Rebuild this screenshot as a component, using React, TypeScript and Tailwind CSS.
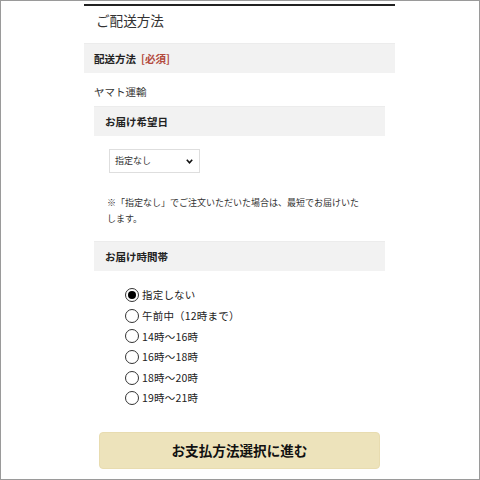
import React from "react";

const times = [
  "指定しない",
  "午前中（12時まで）",
  "14時～16時",
  "16時～18時",
  "18時～20時",
  "19時～21時"
];

const SubHeader: React.FC<{ label: string }> = ({ label }) => (
  <div className="h-[30px] bg-[#f2f2f2] border-t border-[#ececec] pl-[11px] flex items-center text-[10.5px] font-bold text-[#222]">
    {label}
  </div>
);

const App: React.FC = () => {
  return (
    <div
      className="w-[480px] h-[480px] border border-[#9a9a9a] bg-white overflow-hidden"
      style={{ fontFamily: '"Noto Sans CJK JP", "Noto Sans", sans-serif' }}
    >
      <div className="ml-[83px] w-[311px] pt-[3px]">
        <div className="h-[2px] bg-[#222]" />
        <h1 className="h-[28px] leading-[28px] pl-[12px] mb-[9px] text-[13.6px] text-[#333]">
          ご配送方法
        </h1>
        <div className="h-[30px] bg-[#f2f2f2] border-t border-[#ececec] px-[10px] flex items-center gap-[5px] text-[10.5px] font-bold text-[#222]">
          <span>配送方法</span>
          <span className="text-[#b34a3d]">[必須]</span>
        </div>
        <div className="px-[10px]">
          <div className="mt-[11px] mb-[6px] h-[16px] leading-[16px] text-[10.5px] text-[#333]">
            ヤマト運輸
          </div>
          <SubHeader label="お届け希望日" />
          <div className="pl-[15px] mt-[13px]">
            <div className="w-[91px] h-[24px] border border-[#dedede] bg-white flex items-center justify-between pl-[5px] pr-[6px] text-[9px] text-[#333]">
              <span>指定なし</span>
              <svg width="7" height="5" viewBox="0 0 7 5">
                <polyline points="0.8,0.8 3.5,3.8 6.2,0.8" fill="none" stroke="#111" strokeWidth="1.6" />
              </svg>
            </div>
          </div>
          <p className="mt-[22px] mb-[15px] pl-[13px] w-[271px] text-[9px] leading-[15.5px] text-[#333]">
            ※「指定なし」でご注文いただいた場合は、最短でお届けいたします。
          </p>
          <SubHeader label="お届け時間帯" />
          <ul className="mt-[14px] pl-[31px]">
            {times.map((t, i) => (
              <li key={t} className="h-[20.6px] flex items-center gap-[3px] text-[10.5px] text-[#222]">
                <span className="w-[14px] h-[14px] rounded-full border border-[#333] flex items-center justify-center shrink-0">
                  {i === 0 && <span className="w-[8px] h-[8px] rounded-full bg-black" />}
                </span>
                <span className="tracking-[0.2px]">{t}</span>
              </li>
            ))}
          </ul>
        </div>
        <button className="mt-[23px] ml-[15px] w-[281px] h-[37px] rounded-[4px] bg-[#ede3bb] border border-[#e8dcb0] text-[13.6px] font-bold text-[#111] flex items-center justify-center">
          お支払方法選択に進む
        </button>
      </div>
    </div>
  );
};

export default App;
